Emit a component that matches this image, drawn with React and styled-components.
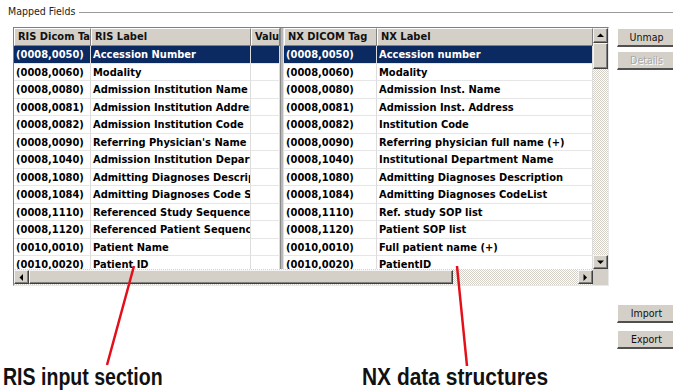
import React from "react";
import styled, { createGlobalStyle } from "styled-components";

const GlobalStyle = createGlobalStyle`
  html, body {
    margin: 0;
    padding: 0;
    background: #fff;
    overflow: hidden;
  }
  #root {
    position: relative;
    width: 673px;
    height: 391px;
  }
`;

const ui = `"DejaVu Sans Condensed", "DejaVu Sans", Tahoma, sans-serif`;
const face = "#d4d0c8";
const cols = [77, 160, 29, 4, 93, 216];

const rows = [
  ["(0008,0050)", "Accession Number", "(0008,0050)", "Accession number"],
  ["(0008,0060)", "Modality", "(0008,0060)", "Modality"],
  ["(0008,0080)", "Admission Institution Name", "(0008,0080)", "Admission Inst. Name"],
  ["(0008,0081)", "Admission Institution Address", "(0008,0081)", "Admission Inst. Address"],
  ["(0008,0082)", "Admission Institution Code", "(0008,0082)", "Institution Code"],
  ["(0008,0090)", "Referring Physician's Name", "(0008,0090)", "Referring physician full name (+)"],
  ["(0008,1040)", "Admission Institution Department", "(0008,1040)", "Institutional Department Name"],
  ["(0008,1080)", "Admitting Diagnoses Description", "(0008,1080)", "Admitting Diagnoses Description"],
  ["(0008,1084)", "Admitting Diagnoses Code Sequence", "(0008,1084)", "Admitting Diagnoses CodeList"],
  ["(0008,1110)", "Referenced Study Sequence", "(0008,1110)", "Ref. study SOP list"],
  ["(0008,1120)", "Referenced Patient Sequence", "(0008,1120)", "Patient SOP list"],
  ["(0010,0010)", "Patient Name", "(0010,0010)", "Full patient name (+)"],
  ["(0010,0020)", "Patient ID", "(0010,0020)", "PatientID"],
];

const Page = styled.div`
  width: 673px;
  height: 391px;
  font-family: ${ui};
`;

const Legend = styled.div`
  display: flex;
  align-items: center;
  height: 14px;
  margin-top: 4px;
  padding-left: 8px;
  font-size: 10.5px;
  color: #222;
`;

const LegendLine = styled.div`
  flex: 1;
  margin-left: 4px;
  margin-top: 3px;
  border-top: 1px solid #9a9a9a;
  border-bottom: 1px solid #fff;
`;

const Main = styled.div`
  display: flex;
  align-items: flex-start;
  margin-top: 9px;
  padding-left: 13px;
`;

const Frame = styled.div`
  display: grid;
  grid-template-columns: 579px 15px;
  grid-template-rows: 241px 16px;
  border-top: 1px solid #808080;
  border-left: 1px solid #808080;
  border-right: 1px solid #e8e8e8;
  border-bottom: 1px solid #e8e8e8;
  background: #fff;
`;

const Grid = styled.div`
  display: grid;
  grid-template-columns: ${cols.map((c) => c + "px").join(" ")};
  grid-template-rows: 18px;
  grid-auto-rows: 17.5px;
  overflow: hidden;
  font-size: 11px;
  font-weight: bold;
`;

const HeadCell = styled.div`
  background: ${face};
  border-top: 1px solid #fff;
  border-left: 1px solid #fff;
  border-right: 1px solid #808080;
  border-bottom: 1px solid #808080;
  padding-left: 3px;
  line-height: 16px;
  white-space: nowrap;
  overflow: hidden;
  color: #111;
`;

const Cell = styled.div`
  padding-left: 2px;
  line-height: 17px;
  white-space: nowrap;
  overflow: hidden;
  border-right: 1px solid #dcdcdc;
  border-bottom: 1px solid #e6e6e6;
  background: ${(p) => (p.$sel ? "#0b2a61" : "#fff")};
  color: ${(p) => (p.$sel ? "#fff" : "#000")};
`;

const Splitter = styled.div`
  background: #b8b8b8;
  border-left: 1px solid #8a8a8a;
  border-right: 1px solid #e0e0e0;
`;

const VScroll = styled.div`
  display: flex;
  flex-direction: column;
  background: repeating-conic-gradient(${face} 0 25%, #fff 0 50%) 0 0 / 2px 2px;
`;

const HScroll = styled.div`
  display: flex;
  background: repeating-conic-gradient(${face} 0 25%, #fff 0 50%) 0 0 / 2px 2px;
  padding-top: 1px;
`;

const Bevel = styled.div`
  box-sizing: border-box;
  display: flex;
  align-items: center;
  justify-content: center;
  flex: none;
  width: ${(p) => p.$w}px;
  height: ${(p) => p.$h}px;
  background: ${face};
  border-top: 1px solid #f4f4f4;
  border-left: 1px solid #f4f4f4;
  border-right: 1px solid #404040;
  border-bottom: 1px solid #404040;
  box-shadow: inset -1px -1px 0 #808080;
`;

const Track = styled.div`
  flex: 1;
`;

const Corner = styled.div`
  background: ${face};
`;

const ButtonCol = styled.div`
  display: flex;
  flex-direction: column;
  margin-left: 8px;
  padding-top: 1px;
`;

const Button = styled.div`
  box-sizing: border-box;
  width: 58px;
  height: 19px;
  margin-top: ${(p) => p.$gap || 0}px;
  display: flex;
  align-items: center;
  justify-content: center;
  background: ${face};
  border-top: 1px solid #fff;
  border-left: 1px solid #fff;
  border-bottom: 2px solid #505050;
  font-size: 10.5px;
  color: ${(p) => (p.$disabled ? "#a8a8a8" : "#111")};
  text-shadow: ${(p) => (p.$disabled ? "1px 1px 0 #fff" : "none")};
`;

const Captions = styled.div`
  display: grid;
  grid-template-columns: 359px auto;
  margin-top: 15px;
  padding-left: 3px;
  font-family: "Liberation Sans", Arial, sans-serif;
  font-size: 23px;
  font-weight: bold;
  color: #111;
  line-height: 26px;
`;

const Caption = styled.span`
  display: inline-block;
  white-space: nowrap;
  transform: scaleX(${(p) => p.$sx});
  transform-origin: left center;
`;

const Overlay = styled.svg`
  position: absolute;
  left: 0;
  top: 0;
  pointer-events: none;
`;

const Arrow = ({ dir }) => {
  const pts = {
    up: "0,4 7,4 3.5,0.5",
    down: "0,0.5 7,0.5 3.5,4",
    left: "4,0 4,7 0.5,3.5",
    right: "0.5,0 0.5,7 4,3.5",
  }[dir];
  const vertical = dir === "up" || dir === "down";
  return (
    <svg width={vertical ? 7 : 5} height={vertical ? 5 : 7}>
      <polygon points={pts} fill="#000" />
    </svg>
  );
};

export default function App() {
  return (
    <Page>
      <GlobalStyle />
      <Legend>
        Mapped Fields
        <LegendLine />
      </Legend>
      <Main>
        <Frame>
          <Grid>
            <HeadCell>RIS Dicom Tag</HeadCell>
            <HeadCell>RIS Label</HeadCell>
            <HeadCell>Value</HeadCell>
            <Splitter />
            <HeadCell>NX DICOM Tag</HeadCell>
            <HeadCell>NX Label</HeadCell>
            {rows.map((r, i) => (
              <React.Fragment key={i}>
                <Cell $sel={i === 0}>{r[0]}</Cell>
                <Cell $sel={i === 0}>{r[1]}</Cell>
                <Cell $sel={i === 0}></Cell>
                <Splitter />
                <Cell $sel={i === 0}>{r[2]}</Cell>
                <Cell $sel={i === 0}>{r[3]}</Cell>
              </React.Fragment>
            ))}
          </Grid>
          <VScroll>
            <Bevel $w={15} $h={15}>
              <Arrow dir="up" />
            </Bevel>
            <Bevel $w={15} $h={26} />
            <Track />
            <Bevel $w={15} $h={14}>
              <Arrow dir="down" />
            </Bevel>
          </VScroll>
          <HScroll>
            <Bevel $w={15} $h={14}>
              <Arrow dir="left" />
            </Bevel>
            <Bevel $w={424} $h={14} />
            <Track />
            <Bevel $w={15} $h={14}>
              <Arrow dir="right" />
            </Bevel>
          </HScroll>
          <Corner />
        </Frame>
        <ButtonCol>
          <Button>Unmap</Button>
          <Button $gap={4} $disabled>
            Details
          </Button>
          <Button $gap={234}>Import</Button>
          <Button $gap={7}>Export</Button>
        </ButtonCol>
      </Main>
      <Captions>
        <Caption $sx={0.85}>RIS input section</Caption>
        <Caption $sx={0.91}>NX data structures</Caption>
      </Captions>
      <Overlay width="673" height="391">
        <line x1="134" y1="262" x2="107" y2="361" stroke="#e3101a" strokeWidth="2.5" />
        <line x1="457" y1="262" x2="467" y2="362" stroke="#e3101a" strokeWidth="2.5" />
      </Overlay>
    </Page>
  );
}
